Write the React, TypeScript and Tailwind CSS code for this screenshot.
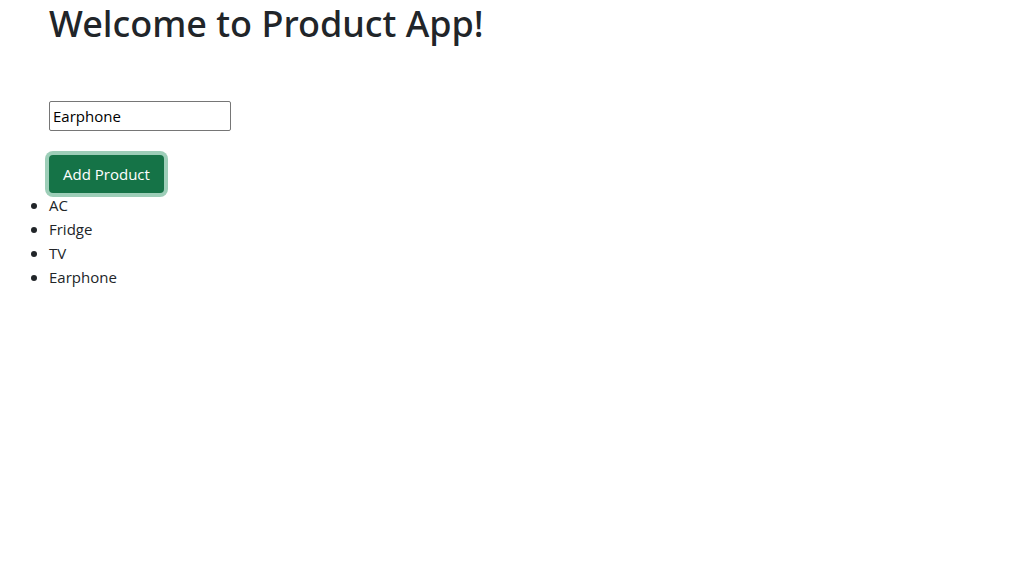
import { useState } from "react";

export default function App() {
  const [name, setName] = useState("Earphone");
  const [products, setProducts] = useState(["AC", "Fridge", "TV", "Earphone"]);

  return (
    <main className="min-h-screen bg-white px-[49px] font-['Open_Sans',sans-serif] text-[15px] text-[#212529]">
      <h1 className="font-['Noto_Sans',sans-serif] text-4xl/12 font-medium">Welcome to Product App!</h1>
      <form
        className="mt-[53px] flex flex-col items-start gap-6"
        onSubmit={(event) => {
          event.preventDefault();
          setProducts([...products, name]);
        }}
      >
        <input
          type="text"
          aria-label="Product name"
          value={name}
          onChange={(event) => setName(event.target.value)}
          className="h-[30px] w-[182px] rounded-xs border border-[#767676] bg-white px-[3px] text-black"
        />
        <button
          type="submit"
          className="h-[38px] min-w-[115px] rounded-sm bg-[#157347] px-3 text-white ring-4 ring-[#9dceb8]"
        >
          Add Product
        </button>
      </form>
      <ul className="list-disc text-base/6">
        {products.map((product, index) => (
          <li key={index}>
            <span className="text-[15px]">{product}</span>
          </li>
        ))}
      </ul>
    </main>
  );
}
